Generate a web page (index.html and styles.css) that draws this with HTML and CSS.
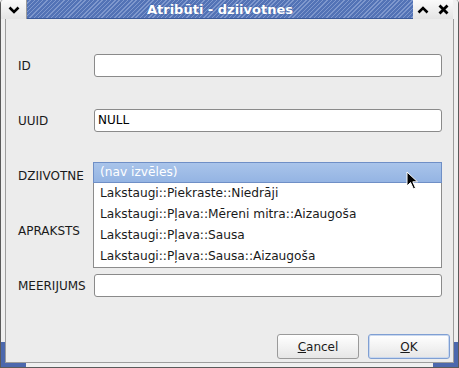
FILE: index.html
```html
<!DOCTYPE html>
<html>
    <head>
        <link rel="stylesheet" href="styles.css">
    </head>
    <body>
        <div class="window">
            <div class="titlebar">
                <div class="tbtn menu">
                    <svg width="12" height="8" viewBox="0 0 12 8"><path d="M1.5 1.5 L6 6 L10.5 1.5" fill="none" stroke="#000" stroke-width="2.6"/></svg>
                </div>
                <div class="title">Atribūti - dziivotnes</div>
                <div class="tbtn">
                    <svg width="12" height="8" viewBox="0 0 12 8"><path d="M1.5 6.5 L6 2 L10.5 6.5" fill="none" stroke="#000" stroke-width="2.6"/></svg>
                </div>
                <div class="tbtn">
                    <svg width="11" height="11" viewBox="0 0 11 11"><path d="M1.5 1.5 L9.5 9.5 M9.5 1.5 L1.5 9.5" fill="none" stroke="#000" stroke-width="2.8"/></svg>
                </div>
                <div class="tend"></div>
            </div>
            <div class="content">
                <div class="form">
                    <div class="row">
                        <label>ID</label>
                        <div class="field"></div>
                    </div>
                    <div class="row">
                        <label>UUID</label>
                        <div class="field">NULL</div>
                    </div>
                    <div class="row">
                        <label>DZIIVOTNE</label>
                        <div class="field combo"></div>
                    </div>
                    <div class="row">
                        <label>APRAKSTS</label>
                        <div class="field"></div>
                    </div>
                    <div class="row">
                        <label>MEERIJUMS</label>
                        <div class="field"></div>
                    </div>
                </div>
                <div class="buttons">
                    <button><u>C</u>ancel</button>
                    <button class="default"><u>O</u>K</button>
                </div>
                <div class="popup">
                    <div class="item selected">(nav izvēles)</div>
                    <div class="item">Lakstaugi::Piekraste::Niedrāji</div>
                    <div class="item">Lakstaugi::Pļava::Mēreni mitra::Aizaugoša</div>
                    <div class="item">Lakstaugi::Pļava::Sausa</div>
                    <div class="item">Lakstaugi::Pļava::Sausa::Aizaugoša</div>
                </div>
                <svg class="cursor" width="14" height="20" viewBox="0 0 14 20">
                    <path d="M1 1 L1 15 L4.5 11.5 L7.5 18 L9.5 17 L6.8 10.8 L11.5 10.8 Z" fill="#000" stroke="#fff" stroke-width="1"/>
                </svg>
            </div>
            <div class="corner left"></div>
            <div class="corner right"></div>
        </div>
    </body>
</html>
```

FILE: styles.css
```css
body{
    margin: 0;
    background: #ececec;
    font-family: "DejaVu Sans", sans-serif;
    font-size: 12px;
    color: #1a1a1a;
}
.window{
    position: relative;
    width: 459px;
    height: 368px;
    box-sizing: border-box;
    display: flex;
    flex-direction: column;
    background: #efefef;
    border: 1px solid #5a5a5a;
    border-top: none;
    border-radius: 4px 4px 0 0;
    overflow: hidden;
}
.titlebar{
    display: flex;
    height: 19px;
    flex-shrink: 0;
    background: #eeeeee;
}
.tbtn{
    width: 20px;
    display: flex;
    align-items: center;
    justify-content: center;
    background: linear-gradient(#fafafa, #e4e4e4);
}
.tbtn.menu{
    width: 25px;
    border-right: 1px solid #9a9a9a;
}
.title{
    flex: 1;
    text-align: center;
    color: #fff;
    font-weight: bold;
    font-size: 13px;
    line-height: 19px;
    background: repeating-linear-gradient(135deg, #5373b6 0px, #5373b6 2px, #7f98cd 2px, #7f98cd 3px);
    border-bottom: 1px solid #3b5a9a;
    box-sizing: border-box;
    text-shadow: 0 0 2px #3f5e9e;
}
.tend{
    width: 5px;
    background: #f0f0f0;
}
.content{
    flex: 1;
    position: relative;
    margin: 0 4px 4px 4px;
    background: #ececec;
    border: 1px solid #9c9c9c;
    border-top: none;
    display: flex;
    flex-direction: column;
    justify-content: space-between;
}
.form{
    display: flex;
    flex-direction: column;
    gap: 32px;
    padding: 35px 11px 0 12px;
}
.row{
    display: flex;
    align-items: center;
    height: 23px;
}
label{
    width: 76px;
}
.field{
    flex: 1;
    height: 23px;
    box-sizing: border-box;
    background: #fff;
    border: 1px solid #8a8a8a;
    border-radius: 3px;
    padding-left: 3px;
    line-height: 21px;
    color: #000;
}
.buttons{
    display: flex;
    justify-content: flex-end;
    gap: 9px;
    padding: 0 3px 3px 0;
}
button{
    width: 82px;
    height: 25px;
    font-family: "DejaVu Sans", sans-serif;
    font-size: 12px;
    color: #1a1a1a;
    background: linear-gradient(#ffffff, #e6e6e6);
    border: 1px solid #9a9a9a;
    border-radius: 3px;
}
button.default{
    border-color: #7f9fd3;
    box-shadow: inset 0 0 0 1px #c9d8ef;
}
.popup{
    position: absolute;
    left: 87px;
    top: 143px;
    width: 349px;
    box-sizing: border-box;
    background: #fff;
    border: 1px solid #8c8c8c;
}
.item{
    height: 21px;
    line-height: 21px;
    padding-left: 6px;
    font-size: 12.2px;
}
.item.selected{
    box-sizing: border-box;
    line-height: 19px;
    background: linear-gradient(#a9c4ea, #94b4e3);
    color: #fff;
    margin: -1px -1px 0 -1px;
    border: 1px solid #6f8fc6;
}
.cursor{
    position: absolute;
    left: 400px;
    top: 152px;
}
.corner{
    position: absolute;
    bottom: 0;
    width: 21px;
    height: 21px;
    border-bottom: 4px solid #4c68ad;
}
.corner.left{
    left: 0;
    border-left: 4px solid #4c68ad;
}
.corner.right{
    right: 0;
    border-right: 4px solid #4c68ad;
}
```
